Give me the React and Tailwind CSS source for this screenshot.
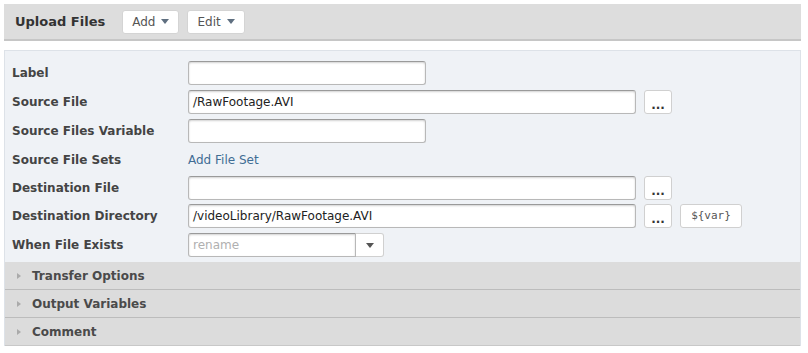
const font = { fontFamily: '"DejaVu Sans", Verdana, sans-serif' };

function Caret({ className = "" }) {
  return (
    <svg width="8" height="5" viewBox="0 0 8 5" className={className}>
      <path d="M0 0h8L4 5z" fill="currentColor" />
    </svg>
  );
}

function MenuButton({ label }) {
  return (
    <button className="h-[24px] px-[9px] flex items-center gap-[6px] bg-white border border-[#d4d4d4] rounded-[3px] text-[12px] text-[#555]">
      {label}
      <Caret className="text-[#5f6f80]" />
    </button>
  );
}

function Input({ value, w = "w-[238px]" }) {
  return (
    <div className={`${w} h-[24px] bg-white border border-[#b8b8b8] border-t-[#9a9a9a] rounded-[3px] shadow-[inset_0_1px_2px_rgba(0,0,0,0.18)] flex items-center px-[4px] text-[12px] text-[#222]`}>
      {value}
    </div>
  );
}

function Dots() {
  return (
    <button className="w-[28px] h-[24px] ml-[8px] bg-white border border-[#d0d0d0] rounded-[3px] text-[12px] font-bold text-[#333] leading-none pt-[6px]">
      ...
    </button>
  );
}

function Row({ label, children, className = "h-[24px]" }) {
  return (
    <div className={`flex items-center ${className}`}>
      <div className="w-[176px] text-[12px] font-bold text-[#444]">{label}</div>
      <div className="flex items-center">{children}</div>
    </div>
  );
}

function Section({ title }) {
  return (
    <div className="h-[28px] flex items-center bg-[#dcdcdc] border-b border-[#bcbcbc] last:border-b-[#c8c8c8]">
      <svg width="4" height="6" viewBox="0 0 4 6" className="ml-[12px] mr-[11px] text-[#aaa]">
        <path d="M0 0l4 3-4 3z" fill="currentColor" />
      </svg>
      <span className="text-[12px] font-bold text-[#4a4a4a]">{title}</span>
    </div>
  );
}

export default function App() {
  return (
    <div style={font} className="w-[808px] h-[353px] bg-white pt-[4px] pl-[4px]">
      <div className="w-[797px]">
        <div className="h-[37px] bg-[#dddddd] border-b-2 border-[#c6c6c6] flex items-center pl-[11px]">
          <span className="text-[13px] font-bold text-[#333] mr-[17px]">Upload Files</span>
          <div className="flex gap-[8px]">
            <MenuButton label="Add" />
            <MenuButton label="Edit" />
          </div>
        </div>

        <div className="mt-[9px] bg-[#eff2f6] border border-[#dde2e8] border-b-0">
          <div className="pl-[7px] pt-[10px] pb-[5px] flex flex-col gap-[5px]">
            <Row label="Label">
              <Input value="" />
            </Row>
            <Row label="Source File">
              <Input value="/RawFootage.AVI" w="w-[448px]" />
              <Dots />
            </Row>
            <Row label="Source Files Variable">
              <Input value="" />
            </Row>
            <Row label="Source File Sets" className="h-[23px]">
              <span className="text-[12px] text-[#3f6d94]">Add File Set</span>
            </Row>
            <Row label="Destination File" className="h-[24px] -mb-[1px]">
              <Input value="" w="w-[448px]" />
              <Dots />
            </Row>
            <Row label="Destination Directory">
              <Input value="/videoLibrary/RawFootage.AVI" w="w-[448px]" />
              <Dots />
              <button className="ml-[8px] w-[62px] h-[24px] bg-white border border-[#d0d0d0] rounded-[3px] text-[11px] text-[#555]" style={{ fontFamily: '"DejaVu Sans Mono", monospace' }}>
                {"${var}"}
              </button>
            </Row>
            <Row label="When File Exists">
              <div className="flex">
                <div className="w-[168px] h-[24px] bg-white border border-[#b8b8b8] border-t-[#9a9a9a] rounded-l-[3px] shadow-[inset_0_1px_2px_rgba(0,0,0,0.18)] flex items-center px-[4px] text-[12px] text-[#b0b0b0]">
                  rename
                </div>
                <div className="w-[28px] h-[24px] bg-white border border-l-0 border-[#d0d0d0] rounded-r-[3px] flex items-center justify-center">
                  <Caret className="text-[#555]" />
                </div>
              </div>
            </Row>
          </div>
          <Section title="Transfer Options" />
          <Section title="Output Variables" />
          <Section title="Comment" />
        </div>
      </div>
    </div>
  );
}
